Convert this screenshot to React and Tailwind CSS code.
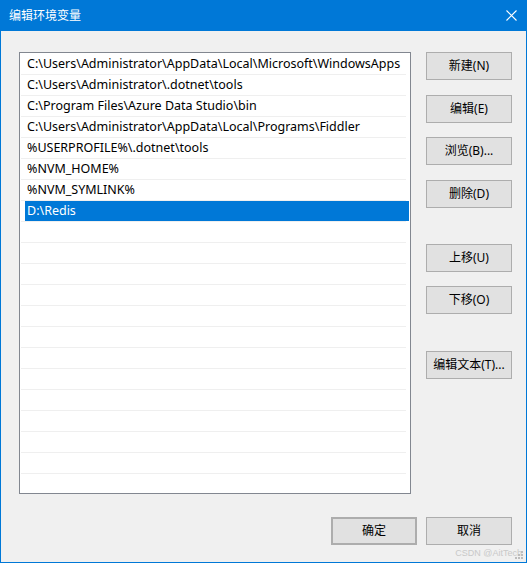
import React from "react";

const rows = [
  "C:\\Users\\Administrator\\AppData\\Local\\Microsoft\\WindowsApps",
  "C:\\Users\\Administrator\\.dotnet\\tools",
  "C:\\Program Files\\Azure Data Studio\\bin",
  "C:\\Users\\Administrator\\AppData\\Local\\Programs\\Fiddler",
  "%USERPROFILE%\\.dotnet\\tools",
  "%NVM_HOME%",
  "%NVM_SYMLINK%",
  "D:\\Redis",
];

const font = { fontFamily: '"Noto Sans", "Noto Sans CJK SC", sans-serif' };

function Btn({ children, className = "" }) {
  return (
    <div
      className={
        "w-[86px] h-[28px] bg-[#e1e1e1] border border-[#adadad] flex items-center justify-center text-[12px] text-black leading-none " +
        className
      }
    >
      {children}
    </div>
  );
}

export default function App() {
  const all = [...rows];
  while (all.length < 21) all.push("");
  return (
    <div
      className="w-[527px] h-[563px] bg-[#0078d7] flex flex-col px-[1px] pb-[1px] overflow-hidden"
      style={font}
    >
      <div className="h-[31px] flex items-center justify-between pl-[8px] pr-[9px] shrink-0">
        <span className="text-white text-[12px] leading-none">编辑环境变量</span>
        <svg width="11" height="11" viewBox="0 0 11 11">
          <path d="M0.5 0.5 L10.5 10.5 M10.5 0.5 L0.5 10.5" stroke="#ffffff" strokeWidth="1.1" />
        </svg>
      </div>
      <div className="flex-1 bg-[#f0f0f0] relative flex flex-col pl-[18px]">
        <div className="flex mt-[21px]">
          <div className="w-[392px] h-[442px] border border-[#828790] bg-white overflow-hidden pt-[1px]">
            {all.map((t, i) => (
              <div key={i} className="h-[21px] flex flex-col">
                <div className="h-[20px] flex pl-[5px] pr-[1px]">
                  <div
                    className={
                      "flex-1 flex items-center pl-[2px] pt-[1px] text-[12.5px] whitespace-nowrap " +
                      (i === 7 ? "bg-[#0078d7] text-white" : "text-black")
                    }
                  >
                    {t}
                  </div>
                </div>
                <div className="h-px ml-[1px] w-[385px] bg-[#efefef]" />
              </div>
            ))}
          </div>
          <div className="ml-[15px] flex flex-col">
            <Btn>新建(N)</Btn>
            <Btn className="mt-[15px]">编辑(E)</Btn>
            <Btn className="mt-[14px]">浏览(B)...</Btn>
            <Btn className="mt-[15px]">删除(D)</Btn>
            <Btn className="mt-[36px]">上移(U)</Btn>
            <Btn className="mt-[14px]">下移(O)</Btn>
            <Btn className="mt-[37px]">编辑文本(T)...</Btn>
          </div>
        </div>
        <div className="flex mt-[23px] pl-[312px]">
          <Btn className="border-2 border-[#0078d7]">确定</Btn>
          <Btn className="ml-[9px]">取消</Btn>
        </div>
        <div
          className="absolute right-[4px] bottom-[4px] text-[9px] leading-none text-[#c9c9c9]"
          style={{ fontFamily: '"Liberation Sans", Arial, sans-serif' }}
        >
          CSDN @AitTech
        </div>
        <svg className="absolute right-[2px] bottom-[2px]" width="10" height="10" viewBox="0 0 10 10">
          <rect x="7" y="1" width="2" height="2" fill="#bcbcbc" />
          <rect x="4" y="4" width="2" height="2" fill="#bcbcbc" />
          <rect x="7" y="4" width="2" height="2" fill="#bcbcbc" />
          <rect x="1" y="7" width="2" height="2" fill="#bcbcbc" />
          <rect x="4" y="7" width="2" height="2" fill="#bcbcbc" />
          <rect x="7" y="7" width="2" height="2" fill="#bcbcbc" />
        </svg>
      </div>
    </div>
  );
}
